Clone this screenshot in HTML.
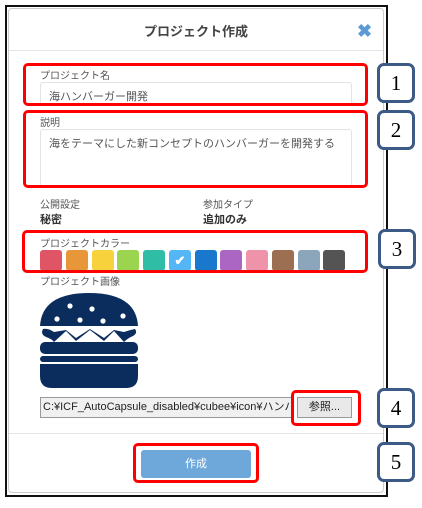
<!DOCTYPE html>
<html><head><meta charset="utf-8"><style>
*{box-sizing:border-box;margin:0;padding:0}
body{width:422px;height:508px;background:#fff;position:relative;overflow:hidden;font-family:"Liberation Sans","Noto Sans CJK JP",sans-serif;color:#333}
.a{position:absolute}
.frame{left:5px;top:5px;width:383px;height:492px;border:2px solid #111;background:#fff}
.dlg{left:8px;top:8px;width:376px;height:485px;border:1px solid #ccc;border-radius:4px;background:#fff}
.lbl{font-size:10px;color:#555}
.inp{border:1px solid #e3e3e3;border-radius:3px;background:#fff;font-size:11px;color:#555;padding:5px 8px;white-space:nowrap}
.red{border:3px solid #f00;border-radius:5px}
.num{width:38px;height:40px;border:3px solid #3b5a85;border-radius:7px;background:#fff;font-family:"Liberation Serif",serif;font-size:21px;color:#000;text-align:center;line-height:34px}
.sw{position:absolute;top:250px;width:22px;height:21px;border-radius:3px}
</style></head><body>
<div class="a frame"></div>
<div class="a dlg"></div>
<div class="a" style="left:9px;top:50px;width:374px;height:1px;background:#e5e5e5"></div>
<div class="a" style="left:0;top:21px;width:392px;text-align:center;font-size:13px;font-weight:bold;color:#444">プロジェクト作成</div>
<div class="a" style="left:357px;top:21px;font-size:18px;font-weight:bold;color:#5b9bd5">✖</div>

<div class="a lbl" style="left:40px;top:67px">プロジェクト名</div>
<div class="a inp" style="left:40px;top:82px;width:312px;height:23px">海ハンバーガー開発</div>
<div class="a red" style="left:23px;top:63px;width:345px;height:43px"></div>

<div class="a lbl" style="left:40px;top:114px">説明</div>
<div class="a inp" style="left:40px;top:129px;width:312px;height:58px">海をテーマにした新コンセプトのハンバーガーを開発する</div>
<div class="a red" style="left:23px;top:110px;width:345px;height:78px"></div>

<div class="a lbl" style="left:40px;top:196px">公開設定</div>
<div class="a lbl" style="left:203px;top:196px">参加タイプ</div>
<div class="a" style="left:40px;top:211px;font-size:11px;font-weight:bold">秘密</div>
<div class="a" style="left:203px;top:211px;font-size:11px;font-weight:bold">追加のみ</div>

<div class="a lbl" style="left:40px;top:235px">プロジェクトカラー</div>
<div class="sw" style="left:40px;background:#e05565"></div>
<div class="sw" style="left:66px;background:#e8963a"></div>
<div class="sw" style="left:92px;background:#f8d23c"></div>
<div class="sw" style="left:117px;background:#9bd44e"></div>
<div class="sw" style="left:143px;background:#30bda5"></div>
<div class="sw" style="left:169px;background:#55b6f5;color:#fff;font-size:13px;text-align:center;line-height:21px;font-weight:bold">✔</div>
<div class="sw" style="left:195px;background:#1a78cc"></div>
<div class="sw" style="left:220px;background:#ab66c4"></div>
<div class="sw" style="left:246px;background:#ee93aa"></div>
<div class="sw" style="left:272px;background:#9d6f52"></div>
<div class="sw" style="left:298px;background:#8ba6bb"></div>
<div class="sw" style="left:323px;background:#545454"></div>
<div class="a red" style="left:22px;top:230px;width:346px;height:43px"></div>

<div class="a lbl" style="left:40px;top:273px">プロジェクト画像</div>
<svg class="a" style="left:40px;top:292px" width="98" height="97" viewBox="0 0 98 97">
<path d="M0 34 Q2 1 49 1 Q96 1 98 34 Z" fill="#0b2d5e"/>
<g fill="#fff"><circle cx="30" cy="14" r="2.6"/><circle cx="52" cy="17" r="2.6"/><circle cx="17" cy="27" r="2.6"/><circle cx="40" cy="28" r="2.6"/><circle cx="63" cy="29" r="2.6"/><circle cx="83" cy="24" r="2.6"/></g>
<path d="M3 37 Q0 42 6 45 Q12 47 14 50 L26 39 L36 49 L50 38 L64 49 L74 39 L84 50 Q88 46 93 44 Q98 41 95 37 Q90 38 84 40 L74 38 L64 46 L50 37 L36 46 L26 38 L14 40 Q8 36 3 37Z" fill="#0b2d5e"/>
<rect x="0" y="50" width="98" height="12" rx="5" fill="#0b2d5e"/>
<rect x="0" y="64" width="98" height="6" rx="3" fill="#0b2d5e"/>
<path d="M0 72 H98 V84 Q98 96 86 96 H12 Q0 96 0 84Z" fill="#0b2d5e"/>
</svg>

<div class="a" style="left:40px;top:397px;width:254px;height:21px;border:1px solid #999;background:#f0f0f0;font-size:11px;line-height:19px;padding-left:2px;overflow:hidden;white-space:nowrap;color:#222">C:¥ICF_AutoCapsule_disabled¥cubee¥icon¥ハンバーガー.png</div>
<div class="a" style="left:297px;top:397px;width:55px;height:21px;border:1px solid #999;background:#e9e9e9;font-size:11px;text-align:center;line-height:19px;color:#222">参照...</div>
<div class="a red" style="left:291px;top:390px;width:70px;height:36px"></div>

<div class="a" style="left:9px;top:433px;width:374px;height:1px;background:#e5e5e5"></div>
<div class="a" style="left:141px;top:450px;width:110px;height:28px;background:#6ea8db;border-radius:3px;color:#fff;font-size:11px;text-align:center;line-height:28px">作成</div>
<div class="a red" style="left:133px;top:443px;width:126px;height:40px"></div>

<div class="a num" style="left:377px;top:63px">1</div>
<div class="a num" style="left:377px;top:110px">2</div>
<div class="a num" style="left:378px;top:229px">3</div>
<div class="a num" style="left:377px;top:388px">4</div>
<div class="a num" style="left:377px;top:442px">5</div>
</body></html>
